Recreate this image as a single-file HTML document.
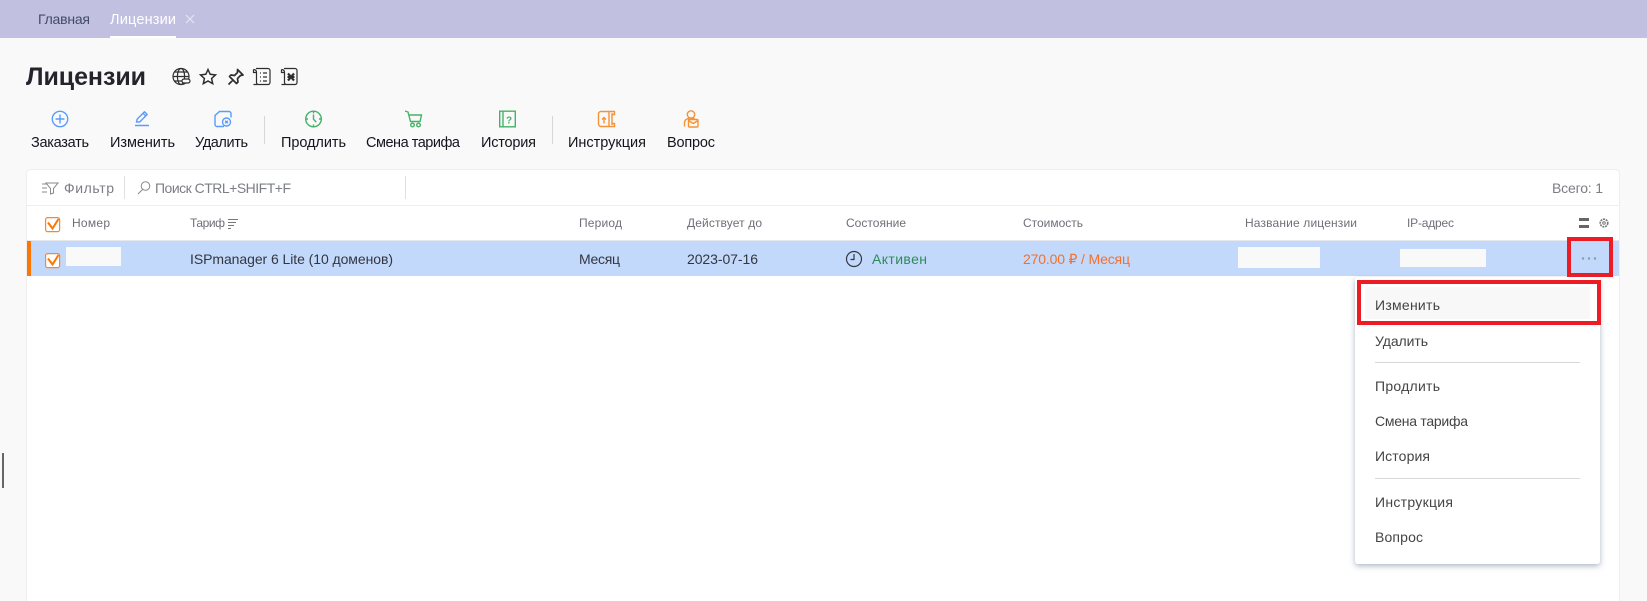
<!DOCTYPE html>
<html lang="ru"><head><meta charset="utf-8"><title>Лицензии</title>
<style>
html,body{margin:0;padding:0;width:1647px;height:601px;overflow:hidden;background:#f9f9f9}
svg{display:block}
text{font-family:"Liberation Sans",sans-serif;font-size:13.5px;fill:#333}
.tb{font-size:14.5px;fill:#15151f}
.th{font-size:12px;fill:#6e7078}
.m{font-size:14px;fill:#444}
.r{font-size:14px;fill:#33363f}
.g{font-size:14px;fill:#7c7e85}
.ib{fill:none;stroke:#5b9bfb;stroke-width:1.4}
.ig{fill:none;stroke:#45b368;stroke-width:1.4}
.io{fill:none;stroke:#f49237;stroke-width:1.4}
.ik{fill:none;stroke:#2e2e2e;stroke-width:1.2}
</style></head><body>
<svg width="1647" height="601" viewBox="0 0 1647 601" xmlns="http://www.w3.org/2000/svg">
<rect width="1647" height="601" fill="#f9f9f9"/>
<rect width="1647" height="38" fill="#c2c0e0"/>
<text x="38" y="24" textLength="52" style="font-size:14px;fill:#3f4c66">Главная</text>
<text x="110" y="24" textLength="66" style="font-size:14.500px;fill:#fff">Лицензии</text>
<path d="M186 15l8 8M194 15l-8 8" stroke="#e6e6f2" stroke-width="1.200"/>
<rect x="110" y="36" width="66" height="2" fill="#fff"/>

<text x="26" y="85" textLength="120" style="font-size:25px;font-weight:bold;fill:#24242c">Лицензии</text>
<!-- title icons -->
<g class="ik">
<circle cx="181" cy="76.500" r="8"/><ellipse cx="181" cy="76.500" rx="3.600" ry="8"/><path d="M173 76.500h16M174.500 72h13M174.500 81h13"/>
<rect x="182" y="79" width="8" height="4" rx="2" fill="#f9f9f9"/>
<path d="M208 69.500l2.200 4.800 5.300.6-3.900 3.600 1.100 5.200-4.700-2.700-4.700 2.700 1.100-5.200-3.900-3.600 5.300-.6z" stroke-width="1.500"/>
<path d="M237.500 69.500l5.500 5.500-2.500.5-3 3 .5 3.500-1.500 1.500-7-7 1.500-1.500 3.500.5 3-3zM232.500 80.500l-4 4" stroke-width="1.700" stroke-linejoin="round"/>
<path d="M256 68.500h12a2 2 0 0 1 2 2v12a2 2 0 0 1-2 2h-10M253.500 69.500c2 0 3 1 3 3v10c0 1 1 2 2 2M253.500 69.500v3h3M253.500 84.500h4M260 73h1m2 0h4M260 77h1m2 0h4M260 81h1m2 0h4"/>
<path d="M284 68.500h11a2 2 0 0 1 2 2v12a2 2 0 0 1-2 2h-9M281.500 69.500c2 0 3 1 3 3v10c0 1 1 2 2 2M281.500 69.500v3h3M281.500 84.500h4"/>
<path d="M288 73.500l6 7M294 73.500l-6 7" stroke-width="2.200"/><path d="M287.500 77h7" stroke-width="2"/>
</g>
<!-- toolbar icons -->
<circle class="ib" cx="60" cy="119" r="7.700"/><path class="ib" d="M60 114.500v9M55.500 119h9"/>
<path class="ib" d="M135 125.500h14M136.500 122l.6-2.800 7.400-7.400 2.700 2.700-7.400 7.400zM143 113.300l2.700 2.700" stroke-linejoin="round"/>
<path class="ib" d="M221 111.500h8a2 2 0 0 1 2 2v4M224 126.500h-7a2 2 0 0 1-2-2v-9l4.500-4h1.500"/><circle class="ib" cx="226.500" cy="122" r="4"/><path class="ib" d="M225.200 120.700l2.600 2.600M227.800 120.700l-2.600 2.600"/>
<circle class="ig" cx="313.500" cy="119" r="7.800"/><path class="ig" d="M313.500 114.500v4.800l2.800 2.800M313.500 111.500v2M313.500 124.500v2M306 119h2M319 119h2"/>
<path class="ig" d="M405 111l3 1 2.500 9.500h9.500l1.500-6.500h-12.800"/><circle class="ig" cx="412.500" cy="125" r="1.800"/><circle class="ig" cx="418.500" cy="125" r="1.800"/>
<rect class="ig" x="499.700" y="111.200" width="15.600" height="15.600"/><path class="ig" d="M503 111v16" stroke-width="2.400"/>
<text x="506" y="123.500" style="font-size:10px;font-weight:bold;fill:#45b368">?</text>
<path class="io" d="M601 111.500h8v15h-8a2.500 2.500 0 0 1-2.500-2.500v-10a2.500 2.500 0 0 1 2.500-2.500zM609 111.500h5.500v3h-2.500M609 126.500h5.500v-3h-2.500M612 113v12"/><path class="io" d="M604 117.500v6M602 119.500l2-2 2 2" stroke-width="1.700"/>
<circle class="io" cx="691" cy="114.500" r="3.700"/><path class="io" d="M684.500 126.500v-4c0-2.500 3-4.500 6.500-4.500 1.500 0 2.500.2 3.500.7"/><rect class="io" x="688.500" y="119.500" width="9.500" height="7.500" rx="1" fill="#f9f9f9"/><path class="io" d="M688.500 120.500l4.750 3 4.750-3"/>
<rect x="264" y="116" width="1" height="28" fill="#d6d6d6"/>
<rect x="552" y="116" width="1" height="28" fill="#d6d6d6"/>
<text class="tb" x="31" y="147" textLength="58">Заказать</text>
<text class="tb" x="110" y="147" textLength="65">Изменить</text>
<text class="tb" x="195" y="147" textLength="53">Удалить</text>
<text class="tb" x="281" y="147" textLength="65">Продлить</text>
<text class="tb" x="366" y="147" textLength="94">Смена тарифа</text>
<text class="tb" x="481" y="147" textLength="55">История</text>
<text class="tb" x="568" y="147" textLength="78">Инструкция</text>
<text class="tb" x="667" y="147" textLength="48">Вопрос</text>

<!-- panel -->
<rect x="26.500" y="169.500" width="1593" height="440" rx="4" fill="#fff" stroke="#eeeeee"/>
<rect x="27" y="205" width="1592" height="1" fill="#eeeeee"/>
<rect x="27" y="240" width="1592" height="1" fill="#e6e8ee"/>
<rect x="124" y="176" width="1" height="23" fill="#e0e0e0"/>
<rect x="405" y="176" width="1" height="23" fill="#e0e0e0"/>
<g fill="none" stroke="#8a8a8a" stroke-width="1">
<path d="M42 184h5M42 188h5M42 192h5M46 183h12l-4.500 5.500v4.500l-3 1v-5.500z"/>
<circle cx="145.500" cy="186" r="4.300"/><path d="M142.500 189.500l-4.500 4.500"/>
</g>
<text class="g" x="64" y="193" textLength="50">Фильтр</text>
<text class="g" x="155" y="193" textLength="136">Поиск CTRL+SHIFT+F</text>
<text class="g" x="1552" y="193" textLength="51">Всего: 1</text>

<text class="th" x="72" y="227" textLength="38">Номер</text>
<text class="th" x="190" y="227" textLength="35">Тариф</text>
<path d="M228 219.500h10M228 222.500h8M228 225.500h6M228 228.500h3" stroke="#777" stroke-width="1" fill="none"/>
<text class="th" x="579" y="227" textLength="43">Период</text>
<text class="th" x="687" y="227" textLength="75">Действует до</text>
<text class="th" x="846" y="227" textLength="60">Состояние</text>
<text class="th" x="1023" y="227" textLength="60">Стоимость</text>
<text class="th" x="1245" y="227" textLength="112">Название лицензии</text>
<text class="th" x="1407" y="227" textLength="47">IP-адрес</text>
<rect x="1579" y="218" width="10" height="3" fill="#666"/><rect x="1579" y="225" width="10" height="3" fill="#666"/>
<circle cx="1604" cy="223" r="3.800" fill="none" stroke="#777" stroke-width="1.600" stroke-dasharray="2 .8"/><circle cx="1604" cy="223" r="1.300" fill="none" stroke="#777"/>

<rect x="27" y="241" width="1592" height="35" fill="#c3d9fc"/>
<rect x="27" y="241" width="4" height="35" fill="#fb7605"/>
<g fill="none" stroke="#f28a30" stroke-width="1.200">
<rect x="45.600" y="217.600" width="14" height="14" rx="2" fill="#fff"/>
<rect x="45.600" y="253.600" width="14" height="14" rx="2" fill="#fff"/>
</g>
<g fill="none" stroke="#fb7605" stroke-width="2">
<path d="M48 222.500l4.500 6 6-9.500"/><path d="M48 258.500l4.500 6 6-9.500"/>
</g>
<rect x="66" y="247" width="55" height="19" fill="#f9f9f9"/>
<text class="r" x="190" y="264" textLength="203">ISPmanager 6 Lite (10 доменов)</text>
<text class="r" x="579" y="264" textLength="41">Месяц</text>
<text class="r" x="687" y="264" textLength="71">2023-07-16</text>
<circle cx="854" cy="259" r="7.500" fill="none" stroke="#333842" stroke-width="1.200"/>
<path d="M854 254v5.500h-3.500" fill="none" stroke="#333842" stroke-width="1.200"/>
<text x="872" y="264" textLength="55" style="font-size:14px;fill:#2e8b57">Активен</text>
<text x="1023" y="264" textLength="107" style="font-size:14px;fill:#f4702a">270.00 ₽ / Месяц</text>
<rect x="1238" y="247" width="82" height="21" fill="#f9f9f9"/>
<rect x="1400" y="249" width="86" height="18" fill="#f9f9f9"/>
<g fill="#8e97a8"><circle cx="1583" cy="258.500" r="1.200"/><circle cx="1589" cy="258.500" r="1.200"/><circle cx="1595" cy="258.500" r="1.200"/></g>
<rect x="1569" y="239" width="42" height="36" fill="none" stroke="#ed1c24" stroke-width="4"/>

<!-- menu -->
<defs><filter id="s" x="-10%" y="-10%" width="120%" height="120%"><feDropShadow dx="0" dy="2" stdDeviation="3" flood-color="#5a6a8a" flood-opacity=".5"/></filter></defs>
<rect x="1355" y="277" width="245" height="287" rx="3" fill="#fff" filter="url(#s)"/>
<rect x="1365" y="287" width="225" height="32" fill="#f8f8f8"/>
<rect x="1359" y="282" width="240" height="41" fill="none" stroke="#ed1c24" stroke-width="4"/>
<text class="m" x="1375" y="310" textLength="65">Изменить</text>
<text class="m" x="1375" y="346" textLength="53">Удалить</text>
<rect x="1375" y="362" width="205" height="1" fill="#d8d8dc"/>
<text class="m" x="1375" y="391" textLength="65">Продлить</text>
<text class="m" x="1375" y="426" textLength="93">Смена тарифа</text>
<text class="m" x="1375" y="461" textLength="55">История</text>
<rect x="1375" y="478" width="205" height="1" fill="#d8d8dc"/>
<text class="m" x="1375" y="507" textLength="78">Инструкция</text>
<text class="m" x="1375" y="542" textLength="48">Вопрос</text>

<rect x="2" y="453" width="2" height="35" fill="#666"/>
</svg>
</body></html>
